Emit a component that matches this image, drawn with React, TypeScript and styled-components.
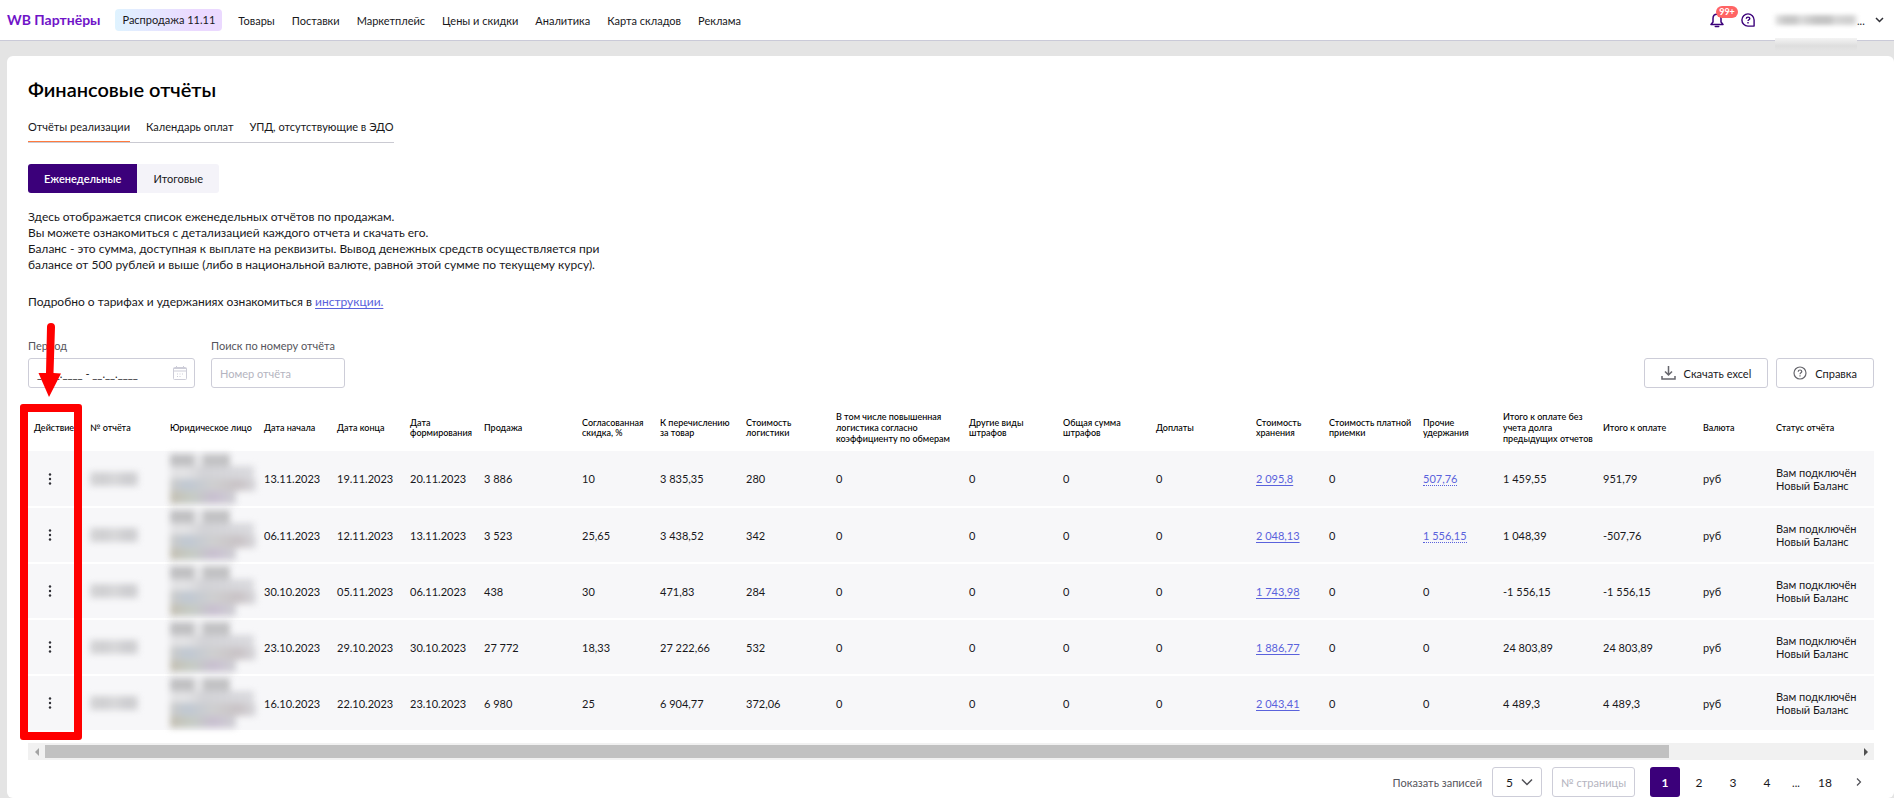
import React from "react";
import styled, { createGlobalStyle, css } from "styled-components";

const Global = createGlobalStyle`
  *, *::before, *::after { box-sizing: border-box; }
  body { margin: 0; background: #e4e4e4; }
  body, button, input, select { font-family: Lato, "Liberation Sans", sans-serif; font-size: 11px; color: #18181b; }
  button, select, input { margin: 0; }
  button { cursor: pointer; }
`;

const Header = styled.header`
  display: flex;
  align-items: center;
  justify-content: space-between;
  height: 41px;
  padding: 0 10px 0 7px;
  background: #fff;
  border-bottom: 1px solid #cacad8;
`;
const HeaderGroup = styled.div`
  display: flex;
  align-items: center;
`;
const Logo = styled.a`
  margin-right: 15px;
  color: #7014c8;
  font-size: 14px;
  font-weight: 700;
  line-height: 18px;
  text-decoration: none;
`;
const Promo = styled.a`
  margin-right: 16px;
  padding: 0 7px;
  border-radius: 4px;
  background: linear-gradient(90deg, #dff3ff, #ebd9ff 75%);
  color: inherit;
  line-height: 22px;
  text-decoration: none;
`;
const Nav = styled.nav`
  display: flex;
  gap: 17px;
`;
const NavLink = styled.a`
  color: inherit;
  text-decoration: none;
`;
const IconButton = styled.button`
  position: relative;
  display: flex;
  padding: 0;
  border: 0;
  background: none;
  color: #3b007a;
`;
const HelpButton = styled(IconButton)`
  margin: 0 20px 0 17px;
`;
const Badge = styled.span`
  position: absolute;
  left: 6px;
  top: -7px;
  width: 22px;
  border-radius: 6px;
  background: #ff6464;
  color: #fff;
  font-size: 9px;
  font-weight: 700;
  line-height: 12px;
  text-align: center;
`;
const Account = styled.button`
  position: relative;
  display: flex;
  align-items: center;
  padding: 0;
  border: 0;
  background: none;
`;
const HiddenName = styled.span`
  width: 82px;
  height: 10px;
  background: linear-gradient(90deg, #e6e6e6, #c8c8c8 12% 24%, #dcdcdc 32%, #c4c4c4 50% 66%, #d8d8d8 74%, #cfcfcf 92%, #e6e6e6);
  filter: blur(2px);
`;
const HiddenShade = styled.span`
  position: absolute;
  left: 0;
  top: 24px;
  width: 82px;
  height: 13px;
  background: linear-gradient(#f4f4f4, #dedede 60%, #e4e4e4);
`;
const AccountDots = styled.span`
  width: 18px;
  text-align: left;
`;

const Card = styled.main`
  margin: 15px 0 0 7px;
  padding: 19px 20px 1px 21px;
  min-height: calc(100vh - 56px);
  border-radius: 6px;
  background: #fff;
`;
const Title = styled.h1`
  margin: 0;
  font-size: 20px;
  font-weight: 600;
  line-height: 28px;
  color: #000;
`;
const Tabs = styled.div`
  display: inline-flex;
  gap: 16px;
  margin-top: 15px;
  border-bottom: 1px solid #cacad2;
`;
const Tab = styled.button<{ $active?: boolean }>`
  height: 24px;
  padding: 0 0 6px;
  border: 0;
  border-bottom: 1px solid ${(p) => (p.$active ? "#ff7a3d" : "transparent")};
  background: none;
`;
const Segments = styled.div`
  display: flex;
  margin-top: 21px;
`;
const Segment = styled.button<{ $active?: boolean }>`
  height: 29px;
  padding: 0 16px;
  border: 0;
  border-radius: 0 3px 3px 0;
  background: #f4f3f9;
  ${(p) =>
    p.$active &&
    css`
      border-radius: 3px 0 0 3px;
      background: #3b007a;
      color: #fff;
      font-weight: 600;
    `}
`;
const Text = styled.p`
  margin: 16px 0 0;
  font-size: 12px;
  line-height: 16px;
`;
const Details = styled(Text)`
  margin-top: 21px;
`;
const Link = styled.a<{ $dotted?: boolean }>`
  color: #5a62dc;
  text-decoration: ${(p) => (p.$dotted ? "none" : "underline")};
  text-underline-offset: 2px;
  border-bottom: ${(p) => (p.$dotted ? "1px dotted #5a62dc" : "0")};
`;

const Filters = styled.div`
  display: flex;
  align-items: flex-end;
  gap: 16px;
  margin-top: 28px;
`;
const Field = styled.div<{ $width: number }>`
  position: relative;
  display: flex;
  flex-direction: column;
  gap: 4px;
  width: ${(p) => p.$width}px;
  label { line-height: 16px; color: #55555c; white-space: nowrap; }
`;
const Input = styled.input`
  width: 100%;
  height: 30px;
  padding: 0 8px;
  border: 1px solid #cdcdd8;
  border-radius: 3px;
  background: #fff;
  &::placeholder { color: #b4b4c0; opacity: 1; }
`;
const FieldIcon = styled.span`
  position: absolute;
  right: 8px;
  bottom: 8px;
  display: flex;
  color: #cdcdd8;
`;
const Actions = styled.div`
  display: flex;
  gap: 8px;
  margin-left: auto;
`;
const OutlineButton = styled.button`
  display: flex;
  align-items: center;
  gap: 8px;
  height: 30px;
  padding: 0 16px;
  border: 1px solid #cdcdd8;
  border-radius: 3px;
  background: #fff;
  svg { color: #66666c; }
`;

const TableArea = styled.section`
  position: relative;
  margin-top: 16px;
`;
const Table = styled.table`
  width: 100%;
  table-layout: fixed;
  border-collapse: collapse;
`;
const HeadCell = styled.th<{ $tall?: boolean }>`
  height: 47px;
  padding: 0 0 0 6px;
  font-size: 9px;
  font-weight: 500;
  line-height: ${(p) => (p.$tall ? 11 : 10)}px;
  text-align: left;
  white-space: pre;
  color: #000;
`;
const Row = styled.tr`
  height: 56px;
  border-bottom: 2px solid #fff;
  background: #f7f7f9;
`;
const Cell = styled.td`
  padding: 0 0 0 6px;
  line-height: 13px;
  white-space: pre;
`;
const MenuButton = styled.button`
  display: flex;
  justify-content: center;
  width: 32px;
  padding: 0;
  border: 0;
  background: none;
`;
const HiddenNumber = styled.span`
  display: block;
  width: 48px;
  height: 14px;
  background: linear-gradient(90deg, #d4d4d6, #cfcfd1 30%, #d8d8da 50%, #cccccf 80%, #d4d4d6);
  filter: blur(3px);
`;
const HiddenEntity = styled.span`
  display: flex;
  flex-direction: column;
  height: 50px;
  filter: blur(3px);
`;
const HiddenLine = styled.i<{ $width: number; $fill: string }>`
  width: ${(p) => p.$width}px;
  flex: 1;
  background: ${(p) => p.$fill};
`;
const ActionFrame = styled.div`
  position: absolute;
  left: -8px;
  top: 0;
  bottom: 20px;
  width: 62px;
  border: 8px solid #f00;
  border-radius: 3px;
`;
const Arrow = styled.svg`
  position: absolute;
  left: 10px;
  top: -81px;
`;
const ScrollBar = styled.div`
  display: flex;
  align-items: center;
  height: 17px;
  margin-top: 11px;
  background: #f1f1f1;
`;
const ScrollArrow = styled.button`
  display: flex;
  align-items: center;
  justify-content: center;
  width: 17px;
  height: 17px;
  padding: 0;
  border: 0;
  background: none;
`;
const ScrollTrack = styled.div`
  display: flex;
  flex: 1;
`;
const ScrollThumb = styled.div`
  width: 89.6%;
  height: 13px;
  background: #c1c1c1;
`;

const Footer = styled.footer`
  display: flex;
  align-items: center;
  justify-content: flex-end;
  margin-top: 7px;
  label { margin-right: 10px; color: #55555c; }
`;
const SelectBox = styled.div`
  position: relative;
  width: 50px;
  margin-right: 10px;
  svg { position: absolute; right: 9px; top: 8px; pointer-events: none; }
`;
const Select = styled.select`
  appearance: none;
  display: block;
  width: 100%;
  height: 30px;
  padding: 0 13px;
  border: 1px solid #cdcdd8;
  border-radius: 3px;
  background: #fff;
  font-size: 12px;
`;
const PageInput = styled(Input)`
  width: 83px;
  margin-right: 15px;
`;
const Pages = styled.nav`
  display: flex;
  align-items: center;
  gap: 4px;
`;
const Page = styled.button<{ $active?: boolean }>`
  display: flex;
  align-items: center;
  justify-content: center;
  width: 30px;
  height: 30px;
  padding: 0;
  border: 0;
  border-radius: 3px;
  font-size: 12px;
  background: ${(p) => (p.$active ? "#3b007a" : "none")};
  color: ${(p) => (p.$active ? "#fff" : "inherit")};
  font-weight: ${(p) => (p.$active ? 700 : 400)};
`;
const Ellipsis = styled.span`
  width: 20px;
  text-align: center;
`;

const nav = ["Товары", "Поставки", "Маркетплейс", "Цены и скидки", "Аналитика", "Карта складов", "Реклама"];

const columns: [string, number][] = [
  ["Действие", 56],
  ["№ отчёта", 80],
  ["Юридическое лицо", 94],
  ["Дата начала", 73],
  ["Дата конца", 73],
  ["Дата\nформирования", 74],
  ["Продажа", 98],
  ["Согласованная\nскидка, %", 78],
  ["К перечислению\nза товар", 86],
  ["Стоимость\nлогистики", 90],
  ["В том числе повышенная\nлогистика согласно\nкоэффициенту по обмерам", 133],
  ["Другие виды\nштрафов", 94],
  ["Общая сумма\nштрафов", 93],
  ["Доплаты", 100],
  ["Стоимость\nхранения", 73],
  ["Стоимость платной\nприемки", 94],
  ["Прочие\nудержания", 80],
  ["Итого к оплате без\nучета долга\nпредыдущих отчетов", 100],
  ["Итого к оплате", 100],
  ["Валюта", 73],
  ["Статус отчёта", 104],
];

type Report = {
  dates: [string, string, string];
  sale: string;
  discount: string;
  transfer: string;
  logistics: string;
  storage: string;
  deductions: string;
  gross: string;
  total: string;
};

const reports: Report[] = [
  { dates: ["13.11.2023", "19.11.2023", "20.11.2023"], sale: "3 886", discount: "10", transfer: "3 835,35", logistics: "280", storage: "2 095,8", deductions: "507,76", gross: "1 459,55", total: "951,79" },
  { dates: ["06.11.2023", "12.11.2023", "13.11.2023"], sale: "3 523", discount: "25,65", transfer: "3 438,52", logistics: "342", storage: "2 048,13", deductions: "1 556,15", gross: "1 048,39", total: "-507,76" },
  { dates: ["30.10.2023", "05.11.2023", "06.11.2023"], sale: "438", discount: "30", transfer: "471,83", logistics: "284", storage: "1 743,98", deductions: "0", gross: "-1 556,15", total: "-1 556,15" },
  { dates: ["23.10.2023", "29.10.2023", "30.10.2023"], sale: "27 772", discount: "18,33", transfer: "27 222,66", logistics: "532", storage: "1 886,77", deductions: "0", gross: "24 803,89", total: "24 803,89" },
  { dates: ["16.10.2023", "22.10.2023", "23.10.2023"], sale: "6 980", discount: "25", transfer: "6 904,77", logistics: "372,06", storage: "2 043,41", deductions: "0", gross: "4 489,3", total: "4 489,3" },
];

function RoundHelp() {
  return (
    <svg width="14" height="14" viewBox="0 0 14 14" fill="none" stroke="currentColor" strokeWidth="1.2">
      <circle cx="7" cy="7" r="6" />
      <path d="M5.2 5.7c0-2.300 3.600-2.200 3.600-.1C8.800 6.900 7 6.800 7 8.300" />
      <path d="M7 9.300v1.300" />
    </svg>
  );
}

function BubbleHelp() {
  return (
    <svg width="14" height="14" viewBox="0 0 14 14" fill="none" stroke="currentColor" strokeWidth="1.4">
      <path d="M7 .900a6.100 6.100 0 1 0 0 12.200h6.100V7A6.100 6.100 0 0 0 7 .900z" strokeLinejoin="round" />
      <path d="M5.300 5.700c0-2.200 3.500-2.100 3.500-.1C8.800 6.800 7 6.800 7 8.100" />
      <path d="M7 9.100v1.400" />
    </svg>
  );
}

function ReportRow({ report: r }: { report: Report }) {
  return (
    <Row>
      <Cell>
        <MenuButton aria-label="Действия">
          <svg width="4" height="14" viewBox="0 0 4 14" fill="#303036">
            <circle cx="2" cy="2.500" r="1.200" />
            <circle cx="2" cy="7" r="1.200" />
            <circle cx="2" cy="11.500" r="1.200" />
          </svg>
        </MenuButton>
      </Cell>
      <Cell><HiddenNumber /></Cell>
      <Cell>
        <HiddenEntity>
          <HiddenLine $width={60} $fill="linear-gradient(90deg, #c0c0c2 38%, #e6e6e8 42% 52%, #c2c2c4 58%)" />
          <HiddenLine $width={84} $fill="linear-gradient(90deg, #e2e2e4 20%, #d2d2d6 40%, #dadade)" />
          <HiddenLine $width={86} $fill="linear-gradient(90deg, #ccccca, #c0c8d2 20%, #cfcfd0 50%, #c9c3c6 80%, #d8d8dc)" />
          <HiddenLine $width={66} $fill="linear-gradient(90deg, #c4c0b4, #c6ccc6 35%, #c8bfd0 65%, #d0d0d4)" />
        </HiddenEntity>
      </Cell>
      {r.dates.map((d) => <Cell key={d}>{d}</Cell>)}
      <Cell>{r.sale}</Cell>
      <Cell>{r.discount}</Cell>
      <Cell>{r.transfer}</Cell>
      <Cell>{r.logistics}</Cell>
      <Cell>0</Cell>
      <Cell>0</Cell>
      <Cell>0</Cell>
      <Cell>0</Cell>
      <Cell><Link href="#storage">{r.storage}</Link></Cell>
      <Cell>0</Cell>
      <Cell>{r.deductions === "0" ? "0" : <Link $dotted href="#deductions">{r.deductions}</Link>}</Cell>
      <Cell>{r.gross}</Cell>
      <Cell>{r.total}</Cell>
      <Cell>руб</Cell>
      <Cell>{"Вам подключён\nНовый Баланс"}</Cell>
    </Row>
  );
}

export default function App() {
  return (
    <>
      <Global />
      <Header>
        <HeaderGroup>
          <Logo href="#home">WB Партнёры</Logo>
          <Promo href="#sale">Распродажа 11.11</Promo>
          <Nav>{nav.map((n) => <NavLink key={n} href="#nav">{n}</NavLink>)}</Nav>
        </HeaderGroup>
        <HeaderGroup>
          <IconButton aria-label="Уведомления">
            <svg width="14" height="15" viewBox="0 0 14 15" fill="none" stroke="currentColor" strokeWidth="1.500" strokeLinejoin="round">
              <path d="M1 11.500h12L11 9V5.500C11 3 9.500 1.300 7 1.300S3 3 3 5.500V9z" />
              <path d="M5.300 13.400h3.400" strokeLinecap="round" />
            </svg>
            <Badge>99+</Badge>
          </IconButton>
          <HelpButton aria-label="Помощь"><BubbleHelp /></HelpButton>
          <Account aria-label="Профиль">
            <HiddenName />
            <HiddenShade />
            <AccountDots>...</AccountDots>
            <svg width="9" height="6" viewBox="0 0 9 6" fill="none" stroke="#303036" strokeWidth="1.500"><path d="M1 1l3.500 3.500L8 1" /></svg>
          </Account>
        </HeaderGroup>
      </Header>
      <Card>
        <Title>Финансовые отчёты</Title>
        <Tabs>
          <Tab $active>Отчёты реализации</Tab>
          <Tab>Календарь оплат</Tab>
          <Tab>УПД, отсутствующие в ЭДО</Tab>
        </Tabs>
        <Segments>
          <Segment $active>Еженедельные</Segment>
          <Segment>Итоговые</Segment>
        </Segments>
        <Text>
          Здесь отображается список еженедельных отчётов по продажам.<br />
          Вы можете ознакомиться с детализацией каждого отчета и скачать его.<br />
          Баланс - это сумма, доступная к выплате на реквизиты. Вывод денежных средств осуществляется при<br />
          балансе от 500 рублей и выше (либо в национальной валюте, равной этой сумме по текущему курсу).
        </Text>
        <Details>Подробно о тарифах и удержаниях ознакомиться в <Link href="#guide">инструкции.</Link></Details>
        <Filters>
          <Field $width={167}>
            <label htmlFor="period">Период</label>
            <Input id="period" defaultValue="__.__.____ - __.__.____" />
            <FieldIcon>
              <svg width="14" height="14" viewBox="0 0 14 14" fill="none" stroke="currentColor">
                <rect x=".5" y="1.500" width="13" height="12" rx="1" />
                <path d="M.5 2.500h13M.5 5h13M3.500 0v3M10.500 0v3" />
                <path d="M4 8h1M6.500 8h1M9 8h1M4 10.500h1M6.500 10.500h1" />
              </svg>
            </FieldIcon>
          </Field>
          <Field $width={134}>
            <label htmlFor="number">Поиск по номеру отчёта</label>
            <Input id="number" placeholder="Номер отчёта" />
          </Field>
          <Actions>
            <OutlineButton>
              <svg width="15" height="14" viewBox="0 0 15 14" fill="none" stroke="currentColor" strokeWidth="1.500">
                <path d="M7.500 0v8.500M4 5.500L7.500 9 11 5.500M1 10v3h13v-3" />
              </svg>
              Скачать excel
            </OutlineButton>
            <OutlineButton><RoundHelp />Справка</OutlineButton>
          </Actions>
        </Filters>
        <TableArea>
          <Table>
            <colgroup>{columns.map(([name, w]) => <col key={name} width={w} />)}</colgroup>
            <thead>
              <tr>{columns.map(([name]) => <HeadCell key={name} $tall={name.split("\n").length > 2}>{name}</HeadCell>)}</tr>
            </thead>
            <tbody>{reports.map((r) => <ReportRow key={r.dates[0]} report={r} />)}</tbody>
          </Table>
          <ScrollBar>
            <ScrollArrow aria-label="Прокрутить влево"><svg width="4" height="8" viewBox="0 0 4 8" fill="#a3a3a3"><path d="M4 0v8L0 4z" /></svg></ScrollArrow>
            <ScrollTrack><ScrollThumb /></ScrollTrack>
            <ScrollArrow aria-label="Прокрутить вправо"><svg width="4" height="8" viewBox="0 0 4 8" fill="#505050"><path d="M0 0v8l4-4z" /></svg></ScrollArrow>
          </ScrollBar>
          <ActionFrame />
          <Arrow width="24" height="74" viewBox="0 0 24 74" fill="#f00">
            <path d="M13 0a4 4 0 0 1 4 4L15.500 50l7.500 .500L11 74 .500 50H8L9 4a4 4 0 0 1 4-4z" />
          </Arrow>
        </TableArea>
        <Footer>
          <label htmlFor="size">Показать записей</label>
          <SelectBox>
            <Select id="size" defaultValue="5"><option>5</option><option>10</option></Select>
            <svg width="12" height="14" viewBox="0 0 12 14" fill="none" stroke="#505056" strokeWidth="1.500"><path d="M1 4.500l5 5 5-5" /></svg>
          </SelectBox>
          <PageInput aria-label="№ страницы" placeholder="№ страницы" />
          <Pages>
            <Page $active>1</Page>
            <Page>2</Page>
            <Page>3</Page>
            <Page>4</Page>
            <Ellipsis>...</Ellipsis>
            <Page>18</Page>
            <Page aria-label="Далее"><svg width="6" height="8" viewBox="0 0 6 8" fill="none" stroke="#505056" strokeWidth="1.200"><path d="M1 .5L4.500 4 1 7.500" /></svg></Page>
          </Pages>
        </Footer>
      </Card>
    </>
  );
}
